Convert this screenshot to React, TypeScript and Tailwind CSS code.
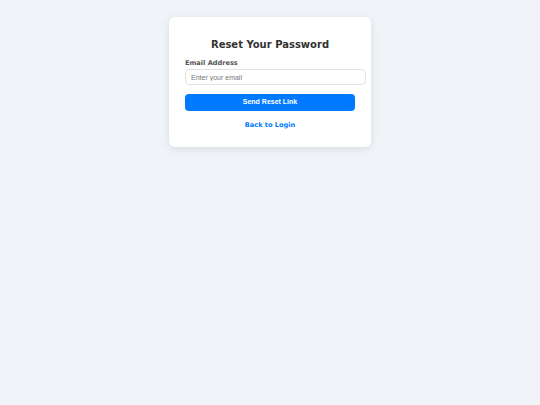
export default function App() {
  return (
    <div className="min-h-[405px] bg-[#f0f4f8] pt-[17px] [font-family:'DejaVu_Sans',sans-serif]">
      <div className="mx-auto w-[202px] rounded-[6px] bg-white px-4 pt-[21px] pb-[18px] shadow-[0_2px_8px_rgba(0,0,0,0.1)]">
        <h2 className="text-center text-[10px] font-bold leading-[14px] text-[#333]">
          Reset Your Password
        </h2>
        <form className="mt-[7px]">
          <label className="block text-[6.6px] font-bold leading-[8px] text-[#555]">
            Email Address
          </label>
          <input
            type="email"
            placeholder="Enter your email"
            className="mt-[2px] box-content block h-[14px] w-full rounded-[4px] border border-[#e3e3e3] pl-[5px] pr-[4px] text-[7px] [font-family:'Liberation_Sans',Arial,sans-serif] placeholder:text-[#777]"
          />
          <button
            type="button"
            className="mt-[9px] block h-[17px] w-full rounded-[4px] bg-[#007bff] text-[7px] font-bold text-white [font-family:'Liberation_Sans',Arial,sans-serif]"
          >
            Send Reset Link
          </button>
        </form>
        <p className="mt-[10px] text-center text-[6.6px] font-bold leading-[8px]">
          <a href="#" className="text-[#007bff]">
            Back to Login
          </a>
        </p>
      </div>
    </div>
  );
}
